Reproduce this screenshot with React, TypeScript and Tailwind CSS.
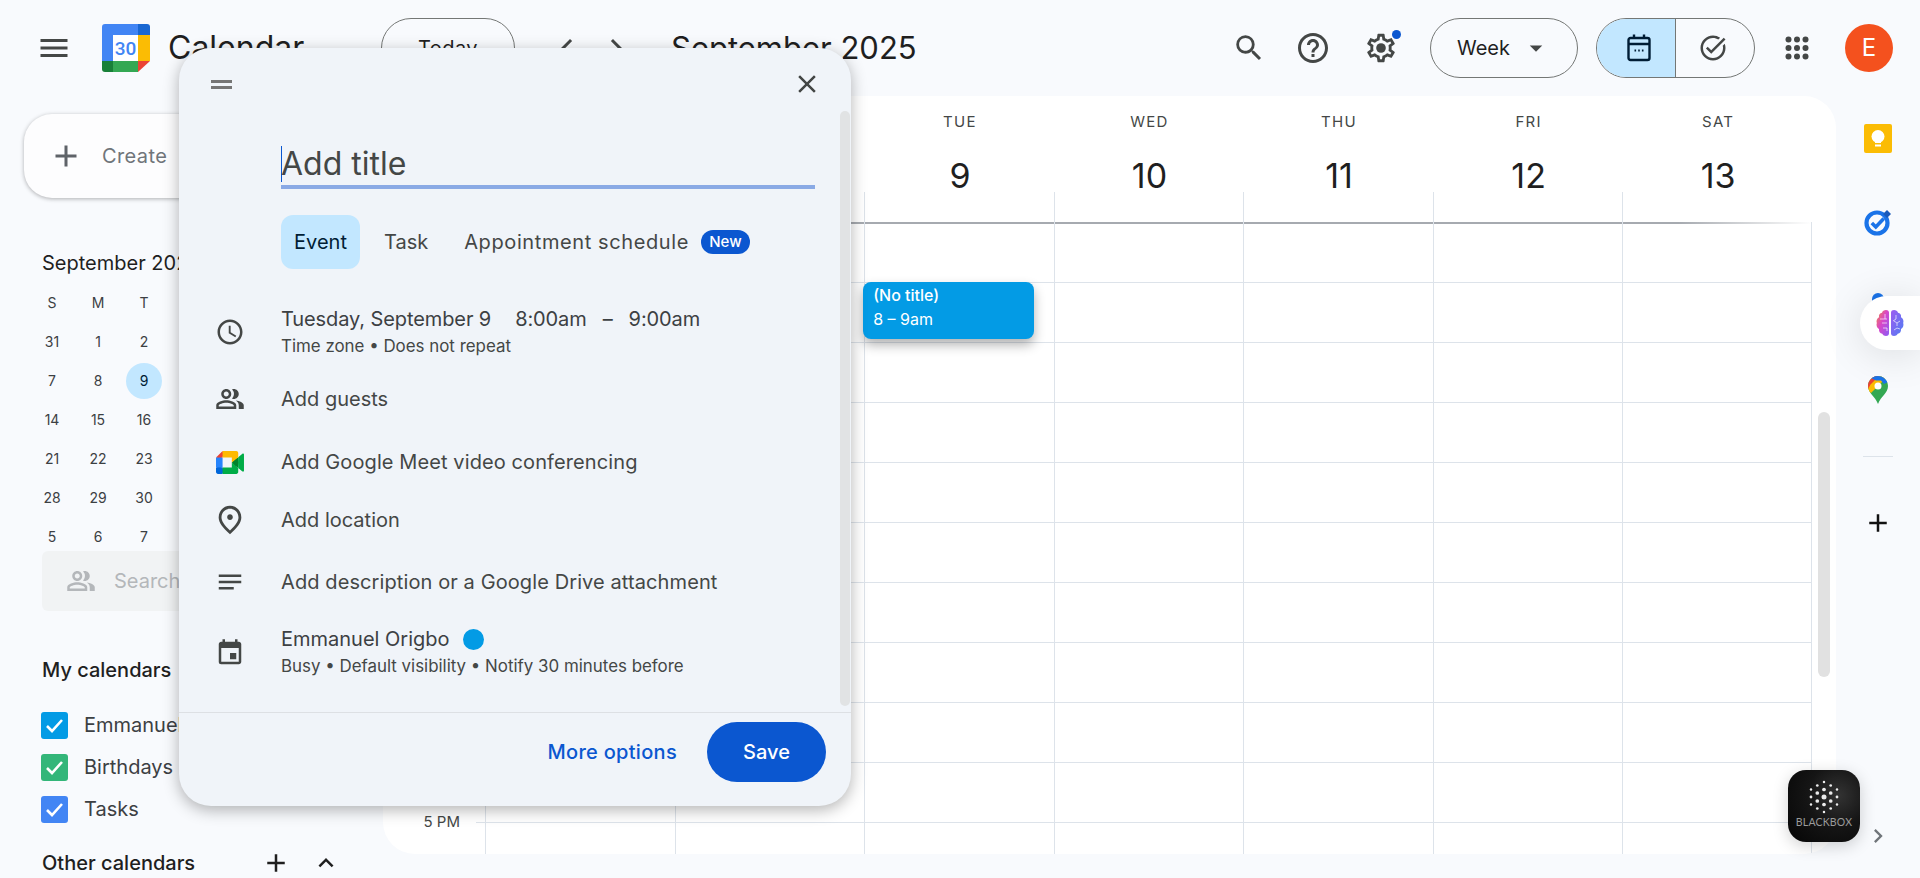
import { MdMenu, MdSearch, MdHelpOutline, MdClose, MdAccessTime, MdOutlinePeopleAlt, MdOutlinePlace, MdNotes, MdEvent, MdExpandLess, MdChevronRight, MdAdd, MdArrowDropDown, MdOutlineTaskAlt, MdChevronLeft } from 'react-icons/md';

const weeks = [
  [31, 1, 2, 3, 4, 5, 6],
  [7, 8, 9, 10, 11, 12, 13],
  [14, 15, 16, 17, 18, 19, 20],
  [21, 22, 23, 24, 25, 26, 27],
  [28, 29, 30, 1, 2, 3, 4],
  [5, 6, 7, 8, 9, 10, 11],
];

const days = [
  { name: 'SUN', date: 7 },
  { name: 'MON', date: 8 },
  { name: 'TUE', date: 9 },
  { name: 'WED', date: 10 },
  { name: 'THU', date: 11 },
  { name: 'FRI', date: 12 },
  { name: 'SAT', date: 13 },
];

const hours = ['', '8 AM', '9 AM', '10 AM', '11 AM', '12 PM', '1 PM', '2 PM', '3 PM', '4 PM', '5 PM'];

// dot columns of the blackbox mark, as [x offset, y offsets]
const dotColumns: [number, number[]][] = [
  [-13, [-7.5, 0, 7.5]],
  [-6.7, [-11.5, -4, 4, 11.5]],
  [0, [-15, -7.5, 0, 7.5, 15]],
  [6.7, [-11.5, -4, 4, 11.5]],
  [13, [-7.5, 0, 7.5]],
];

function CalendarLogo() {
  return (
    <svg width="48" height="48" viewBox="0 0 48 48" className="shrink-0">
      <path d="M3 0h33v11H11v26H0V3a3 3 0 0 1 3-3z" fill="#4285f4" />
      <path d="M36 0h9a3 3 0 0 1 3 3v8H36z" fill="#1967d2" />
      <rect x="36" y="11" width="12" height="26" fill="#fbbc04" />
      <path d="M11 37h25v11H11z" fill="#34a853" />
      <path d="M0 37h11v11H3a3 3 0 0 1-3-3z" fill="#188038" />
      <path d="M36 37h12L36 48z" fill="#ea4335" />
      <rect x="11" y="11" width="25" height="26" fill="#fff" />
      <text x="23.5" y="31" textAnchor="middle" fontSize="19" fontWeight="500" fill="#4285f4" fontFamily="Roboto, sans-serif">30</text>
    </svg>
  );
}

function SettingsIcon() {
  return (
    <svg width="34" height="34" viewBox="0 0 24 24" fill="#444746">
      <path d="M19.43 12.98c.04-.32.07-.64.07-.98 0-.34-.03-.66-.07-.98l2.11-1.65c.19-.15.24-.42.12-.64l-2-3.46c-.09-.16-.26-.25-.44-.25-.06 0-.12.01-.17.03l-2.49 1c-.52-.4-1.08-.73-1.69-.98l-.38-2.65C14.46 2.18 14.25 2 14 2h-4c-.25 0-.46.18-.49.42l-.38 2.65c-.61.25-1.17.59-1.69.98l-2.49-1c-.06-.02-.12-.03-.18-.03-.17 0-.34.09-.43.25l-2 3.46c-.13.22-.07.49.12.64l2.11 1.65c-.04.32-.07.65-.07.98 0 .33.03.66.07.98l-2.11 1.65c-.19.15-.24.42-.12.64l2 3.46c.09.16.26.25.44.25.06 0 .12-.01.17-.03l2.49-1c.52.4 1.08.73 1.69.98l.38 2.65c.03.24.24.42.49.42h4c.25 0 .46-.18.49-.42l.38-2.65c.61-.25 1.17-.59 1.69-.98l2.49 1c.06.02.12.03.18.03.17 0 .34-.09.43-.25l2-3.46c.12-.22.07-.49-.12-.64l-2.11-1.65zm-1.98-1.71c.04.31.05.52.05.73 0 .21-.02.43-.05.73l-.14 1.13.89.7 1.08.84-.7 1.21-1.27-.51-1.04-.42-.9.68c-.43.32-.84.56-1.25.73l-1.06.43-.16 1.13-.2 1.35h-1.4l-.19-1.35-.16-1.13-1.06-.43c-.43-.18-.83-.41-1.23-.71l-.91-.7-1.06.43-1.27.51-.7-1.21 1.08-.84.89-.7-.14-1.13c-.03-.31-.05-.54-.05-.74s.02-.43.05-.73l.14-1.13-.89-.7-1.08-.84.7-1.21 1.27.51 1.04.42.9-.68c.43-.32.84-.56 1.25-.73l1.06-.43.16-1.13.2-1.35h1.39l.19 1.35.16 1.13 1.06.43c.43.18.83.41 1.23.71l.91.7 1.06-.43 1.27-.51.7 1.21-1.07.85-.89.7.14 1.13z" />
      <circle cx="12" cy="12" r="3.4" />
    </svg>
  );
}

function AppsIcon() {
  return (
    <svg width="24" height="24" viewBox="0 0 24 24" fill="#444746">
      {[3.5, 12, 20.5].map((y) =>
        [3.5, 12, 20.5].map((x) => <circle key={`${x}-${y}`} cx={x} cy={y} r="3" />)
      )}
    </svg>
  );
}

function CalendarTabIcon() {
  return (
    <svg width="24" height="28" viewBox="0 0 24 28" fill="none" stroke="#001d35" strokeWidth="2.4">
      <rect x="1.5" y="4" width="21" height="22" rx="2" />
      <path d="M1.5 10h21M7 0.5v4M17 0.5v4" />
      <path d="M7.5 16.5h1.6M11.2 16.5h1.6M14.9 16.5h1.6" strokeWidth="2" />
    </svg>
  );
}

function MeetLogo() {
  return (
    <svg width="28" height="23" viewBox="0 0 87.5 72">
      <path fill="#00832d" d="M49.5 36l8.53 9.75 11.47 7.33 2-17.02-2-16.64-11.69 6.44z" />
      <path fill="#0066da" d="M0 51.5V66c0 3.315 2.685 6 6 6h14.5l3-10.96-3-9.54-9.95-3z" />
      <path fill="#e94235" d="M20.5 0L0 20.5l10.55 3 9.95-3 2.95-9.41z" />
      <path fill="#2684fc" d="M20.5 20.5H0v31h20.5z" />
      <path fill="#00ac47" d="M82.6 8.68L69.5 19.42v33.66l13.16 10.79c1.97 1.54 4.85.135 4.85-2.37V11c0-2.535-2.945-3.925-4.91-2.32zM49.5 36v15.5h-29V72h43c3.315 0 6-2.685 6-6V53.08z" />
      <path fill="#ffba00" d="M63.5 0h-43v20.5h29V36l20-16.57V6c0-3.315-2.685-6-6-6z" />
    </svg>
  );
}

function KeepIcon() {
  return (
    <svg width="28" height="29" viewBox="0 0 28 29">
      <rect width="28" height="29" rx="2" fill="#fbbc04" />
      <circle cx="14" cy="12.5" r="6.5" fill="#fff" />
      <rect x="11" y="16" width="6" height="3" fill="#fff" />
      <rect x="11" y="20.5" width="6" height="2" fill="#fff" />
    </svg>
  );
}

function TasksIcon() {
  return (
    <svg width="28" height="28" viewBox="0 0 28 28">
      <circle cx="13" cy="15" r="10.5" fill="none" stroke="#1a73e8" strokeWidth="4.2" />
      <path d="M7.8 15l4 4 8-8.5" fill="none" stroke="#1a73e8" strokeWidth="3.6" />
      <path d="M19 6l4-4 4 4-4 4z" fill="#185abc" />
    </svg>
  );
}

function MapsIcon() {
  return (
    <svg width="20" height="28" viewBox="0 0 20 28">
      <defs>
        <clipPath id="pin">
          <path d="M10 0C4.5 0 0 4.5 0 10c0 7 7 10 10 18 3-8 10-11 10-18C20 4.5 15.5 0 10 0z" />
        </clipPath>
      </defs>
      <g clipPath="url(#pin)">
        <rect width="20" height="28" fill="#34a853" />
        <path d="M0 10L10 0h10L3 17 0 15z" fill="#fbbc04" />
        <path d="M0 0h10v1L2.5 8.5 0 13z" fill="#ea4335" />
        <path d="M3 2L5 0h15v6l-4 2-3-3.5H8z" fill="#1a73e8" />
      </g>
      <circle cx="10" cy="10" r="3.5" fill="#fff" />
    </svg>
  );
}

function BrainIcon() {
  return (
    <svg width="28" height="26" viewBox="0 0 28 26">
      <defs>
        <linearGradient id="brainLeft" x1="0" y1="0" x2="1" y2="1">
          <stop offset="0" stopColor="#f58a3c" />
          <stop offset="0.45" stopColor="#d946c8" />
          <stop offset="1" stopColor="#8b5cf6" />
        </linearGradient>
        <linearGradient id="brainRight" x1="0" y1="0" x2="1" y2="1">
          <stop offset="0" stopColor="#9d5cf0" />
          <stop offset="1" stopColor="#4f7df3" />
        </linearGradient>
      </defs>
      <path d="M13 2.5C13 .8 11.5 0 10 0 8 0 6.5 1 6 2.8 3.8 3 2.5 5 3 7.2 1 8.4 0 10.5 .8 13 0 15.5 1 18 3 19c-.3 2.5 1 4.5 3.3 4.8C7 25.3 8.5 26 10 26c1.5 0 3-.8 3-2.5z" fill="url(#brainLeft)" />
      <path d="M15 2.5C15 .8 16.5 0 18 0c2 0 3.5 1 4 2.8 2.2.2 3.5 2.2 3 4.4 2 1.2 3 3.3 2.2 5.8.8 2.5-.2 5-2.2 6 .3 2.5-1 4.5-3.3 4.8C21 25.3 19.5 26 18 26c-1.5 0-3-.8-3-2.5z" fill="url(#brainRight)" />
      <path d="M4 9h7M6 13h5M7 18h4v3M9 4v5M20 5v4l-3 2M24 11l-3 2-3-2M21 13v3M24 19l-3-1-3 2" fill="none" stroke="#fff" strokeWidth="0.8" opacity="0.8" />
    </svg>
  );
}

function BlackboxLogo() {
  return (
    <div className="absolute left-[1788px] top-[770px] h-[72px] w-[72px] overflow-hidden rounded-[18px] bg-[radial-gradient(circle_at_70%_35%,#333_0%,#151515_45%,#050505_100%)] shadow-[0_4px_16px_rgba(0,0,0,0.18)]">
      <svg width="72" height="72" viewBox="0 0 72 72" className="absolute inset-0">
        {dotColumns.map(([dx, ys]) =>
          ys.map((dy) => (
            <circle key={`${dx}-${dy}`} cx={36 + dx} cy={27 + dy} r={2.5 - Math.hypot(dx, dy) * 0.085} fill="#ececec" />
          ))
        )}
      </svg>
      <div className="absolute inset-x-0 top-[45px] text-center text-[10.5px] leading-[14px] tracking-[0.2px] text-[#9a9a9a] font-['Lato',sans-serif]">BLACKBOX</div>
    </div>
  );
}

function Check({ color }: { color: string }) {
  return (
    <span className={`flex h-[27px] w-[27px] shrink-0 items-center justify-center rounded-[3px] ${color}`}>
      <svg width="19" height="15" viewBox="0 0 19 15" fill="none" stroke="#fff" strokeWidth="2.6">
        <path d="M2 8l5 5L17 2" />
      </svg>
    </span>
  );
}

function Sidebar() {
  return (
    <aside className="w-[383px] shrink-0 overflow-hidden">
      <button className="ml-6 mt-[18px] flex h-[84px] w-[240px] items-center rounded-[28px] bg-[#fdfdfe] pl-[24px] shadow-[0_1px_4px_rgba(0,0,0,0.3)]">
        <MdAdd className="text-[36px] text-[#5f6368]" />
        <span className="ml-[18px] text-[20px] tracking-[0.4px] text-[#70757a]">Create</span>
      </button>
      <div className="ml-[42px] mt-[51px] h-7 text-[20px] leading-7 text-[#1f1f1f]">September 2025</div>
      <div className="ml-[29px] mt-[6px] grid w-[322px] grid-cols-7 auto-rows-[39px] text-[14px] text-[#3c4043]">
        {['S', 'M', 'T', 'W', 'T', 'F', 'S'].map((d, i) => (
          <div key={i} className="flex items-center justify-center">{d}</div>
        ))}
        {weeks.flat().map((d, i) => (
          <div key={i} className="flex items-center justify-center">
            {i === 9 ? (
              <span className="flex h-9 w-9 items-center justify-center rounded-full bg-[#c2e7ff] text-[#001d35]">{d}</span>
            ) : (
              d
            )}
          </div>
        ))}
      </div>
      <div className="ml-[42px] -mt-[5px] flex h-[60px] w-[300px] items-center rounded-[6px] bg-[#f1f3f4] pl-[24px] text-[20px] text-[#b4b7ba]">
        <MdOutlinePeopleAlt className="text-[30px] text-[#b4b7ba]" />
        <span className="ml-[18px]">Search for people</span>
      </div>
      <div className="ml-[42px] mt-[45px] h-7 text-[20px] leading-7 font-medium text-[#1f1f1f]">My calendars</div>
      <div className="ml-[41px] mt-[20px] flex flex-col">
        {[
          { label: 'Emmanuel Origbo', color: 'bg-[#039be5]' },
          { label: 'Birthdays', color: 'bg-[#33b679]' },
          { label: 'Tasks', color: 'bg-[#4285f4]' },
        ].map((c) => (
          <div key={c.label} className="flex h-[42px] items-center gap-[16px] text-[20px] text-[#3c4043]">
            <Check color={c.color} />
            {c.label}
          </div>
        ))}
      </div>
      <div className="ml-[42px] mt-[19px] flex h-7 items-center text-[20px] font-medium text-[#1f1f1f]">
        Other calendars
        <MdAdd className="ml-auto text-[30px] text-[#1f1f1f]" />
        <MdExpandLess className="ml-[20px] mr-[42px] text-[30px] text-[#1f1f1f]" />
      </div>
    </aside>
  );
}

function CalendarPanel() {
  return (
    <main className="mb-6 flex min-w-0 flex-1 flex-col overflow-hidden rounded-[32px] bg-white">
      <div className="ml-[102px] mr-6 grid shrink-0 grid-cols-7">
        {days.map((d) => (
          <div key={d.name} className="flex flex-col items-center">
            <div className="ml-[2px] mt-[16px] h-5 text-[15px] leading-5 tracking-[1.3px] text-[#444746]">{d.name}</div>
            <div className="ml-[2px] mt-[27px] h-[33px] text-[34px] leading-[34px] text-[#1f1f1f]">{d.date}</div>
            <div className="h-[30px] w-full border-l border-[#dde3ea]" />
          </div>
        ))}
      </div>
      <div className="relative flex-1">
        <div className="absolute top-0 left-[93px] right-6 h-[2px] bg-linear-to-r from-[#a6aab0] from-90% to-transparent" />
        {hours.map((h, i) => (
          <div key={i} className="flex h-[60px]">
            <div className="relative w-[93px] shrink-0">
              {h && <span className="absolute right-[16px] -top-[10px] text-[15px] leading-5 text-[#444746]">{h}</span>}
            </div>
            <div className={`mr-6 flex-1 border-t ${i === 0 ? 'border-transparent' : 'border-[#dde3ea]'}`} />
          </div>
        ))}
        <div className="absolute inset-y-0 left-[102px] right-6 grid grid-cols-7">
          {days.map((d) => (
            <div key={d.name} className="relative border-l border-[#dde3ea] last:border-r">
              {d.name === 'TUE' && (
                <div className="absolute -left-[2px] top-[60px] h-[57px] w-[171px] rounded-[8px] bg-[#039be5] pl-[10px] pt-[1px] text-[16px] leading-[24px] text-white shadow-[0_6px_12px_rgba(0,0,0,0.3)]">
                  <div className="font-medium">(No title)</div>
                  <div>8 – 9am</div>
                </div>
              )}
            </div>
          ))}
        </div>
        <div className="absolute right-[6px] top-[190px] h-[265px] w-3 rounded-full bg-[#e1e1e1]" />
      </div>
    </main>
  );
}

function Rail() {
  return (
    <aside className="flex w-[84px] shrink-0 flex-col items-center">
      <div className="flex h-[84px] items-center justify-center"><KeepIcon /></div>
      <div className="flex h-[84px] items-center justify-center"><TasksIcon /></div>
      <div className="flex h-[84px] items-center justify-center"><span className="h-[26px] w-[12px] rounded-full bg-[#1a73e8]" /></div>
      <div className="flex h-[84px] items-center justify-center"><MapsIcon /></div>
      <div className="mt-[24px] h-px w-[30px] bg-[#dde3ea]" />
      <MdAdd className="mt-[51px] text-[30px] text-[#111]" />
    </aside>
  );
}

function Popup() {
  return (
    <div className="absolute left-[179px] top-[48px] flex h-[758px] w-[672px] flex-col overflow-hidden rounded-[32px] bg-[#f0f4f9] shadow-[0_4px_16px_rgba(0,0,0,0.3)]">
      <div className="flex h-[72px] shrink-0 items-center justify-between pl-[32px] pr-[29px]">
        <div className="flex w-[21px] flex-col gap-[3px]">
          <span className="h-[3px] bg-[#757575]" />
          <span className="h-[3px] bg-[#757575]" />
        </div>
        <MdClose className="text-[30px] text-[#444746]" />
      </div>
      <div className="absolute right-[1px] top-[63px] h-[595px] w-[10px] rounded-full bg-[#e1e3e4]" />
      <div className="relative ml-[102px] mr-[36px] h-[69px] shrink-0 border-b-4 border-[#8aaae5]">
        <span className="absolute left-0 top-[26px] h-[36px] w-px bg-[#0b57d0]" />
        <span className="absolute left-0 top-[22px] text-[32px] leading-[44px] text-[#444746]">Add title</span>
      </div>
      <div className="ml-[102px] mt-[26px] flex h-[54px] shrink-0 items-center text-[20px] text-[#444746]">
        <span className="flex h-[54px] w-[79px] items-center justify-center rounded-[12px] bg-[#c2e7ff] text-[#001d35]">Event</span>
        <span className="ml-[24px]">Task</span>
        <span className="ml-[36px] tracking-[0.6px]">Appointment schedule</span>
        <span className="ml-[12px] flex h-6 w-[49px] items-center justify-center rounded-full bg-[#0b57d0] text-[15px] font-medium text-white">New</span>
      </div>
      <div className="mt-[36px] flex h-[54px] shrink-0 items-center">
        <div className="flex w-[102px] justify-center"><MdAccessTime className="text-[30px] text-[#444746]" /></div>
        <div>
          <div className="flex h-7 items-center text-[20px] tracking-[-0.1px] text-[#3c4043]">
            <span>Tuesday, September 9</span>
            <span className="ml-6">8:00am</span>
            <span className="ml-4">–</span>
            <span className="ml-4">9:00am</span>
          </div>
          <div className="h-[26px] text-[16.9px] leading-[26px] text-[#444746]">Time zone • Does not repeat</div>
        </div>
      </div>
      <div className="mt-[12px] flex h-[56px] shrink-0 items-center">
        <div className="flex w-[102px] justify-center"><MdOutlinePeopleAlt className="text-[30px] text-[#444746]" /></div>
        <span className="text-[20px] text-[#444746]">Add guests</span>
      </div>
      <div className="mt-[7px] flex h-[56px] shrink-0 items-center">
        <div className="flex w-[102px] justify-center"><MeetLogo /></div>
        <span className="text-[20px] tracking-[0.1px] text-[#444746]">Add Google Meet video conferencing</span>
      </div>
      <div className="mt-[2px] flex h-[56px] shrink-0 items-center">
        <div className="flex w-[102px] justify-center"><MdOutlinePlace className="text-[34px] text-[#444746]" /></div>
        <span className="text-[20px] text-[#444746]">Add location</span>
      </div>
      <div className="mt-[6px] flex h-[56px] shrink-0 items-center">
        <div className="flex w-[102px] justify-center"><MdNotes className="text-[30px] text-[#444746]" /></div>
        <span className="text-[20px] tracking-[0.1px] text-[#444746]">Add description or a Google Drive attachment</span>
      </div>
      <div className="mt-[15px] flex h-[54px] shrink-0 items-center">
        <div className="flex w-[102px] justify-center pt-[2px]"><MdEvent className="text-[30px] text-[#444746]" /></div>
        <div>
          <div className="flex h-7 items-center text-[20px] text-[#3c4043]">
            Emmanuel Origbo
            <span className="ml-[13px] h-[21px] w-[21px] rounded-full bg-[#039be5]" />
          </div>
          <div className="h-[26px] text-[16.9px] leading-[26px] text-[#444746]">Busy • Default visibility • Notify 30 minutes before</div>
        </div>
      </div>
      <div className="mt-auto flex h-[94px] shrink-0 justify-end gap-[30px] border-t border-[#dde0e4] pr-[25px] pt-[9px]">
        <span className="flex h-[60px] items-center text-[20px] font-medium tracking-[0.3px] text-[#0b57d0]">More options</span>
        <span className="flex h-[60px] w-[119px] items-center justify-center rounded-full bg-[#0b57d0] text-[20px] font-medium text-white">Save</span>
      </div>
    </div>
  );
}

export default function App() {
  return (
    <div className="relative flex h-[878px] w-[1920px] flex-col overflow-hidden bg-[#f8fafd] font-['Inter',sans-serif]">
      <header className="flex h-[96px] shrink-0 items-center">
        <MdMenu className="ml-[36px] text-[36px] text-[#444746]" />
        <div className="ml-[30px]"><CalendarLogo /></div>
        <span className="ml-[18px] w-[213px] text-[32px] text-[#1f1f1f]">Calendar</span>
        <button className="flex h-[60px] w-[134px] items-center justify-center rounded-full border border-[#747775] text-[20px] tracking-[0.4px] text-[#1f1f1f]">Today</button>
        <MdChevronLeft className="ml-[34px] text-[36px] text-[#444746]" />
        <MdChevronRight className="ml-[13px] text-[36px] text-[#444746]" />
        <span className="ml-[37px] text-[31px] text-[#1f1f1f]">September 2025</span>
        <MdSearch className="ml-auto text-[34px] text-[#444746]" />
        <MdHelpOutline className="ml-[29px] text-[36px] text-[#444746]" />
        <div className="relative ml-[33px]">
          <SettingsIcon />
          <span className="absolute -right-[3px] -top-[1px] h-[9px] w-[9px] rounded-full bg-[#0b57d0]" />
        </div>
        <button className="ml-[32px] flex h-[60px] w-[148px] items-center rounded-full border border-[#747775] pl-[26px] text-[20px] text-[#1f1f1f]">
          Week
          <MdArrowDropDown className="ml-[11px] text-[30px] text-[#444746]" />
        </button>
        <div className="ml-[18px] flex h-[60px] w-[159px] overflow-hidden rounded-full border border-[#747775]">
          <div className="flex w-[79px] items-center justify-center border-r border-[#747775] bg-[#c2e7ff] pl-[5px]"><CalendarTabIcon /></div>
          <div className="flex flex-1 items-center justify-center pr-[5px]"><MdOutlineTaskAlt className="text-[30px] text-[#444746]" /></div>
        </div>
        <div className="ml-[30px]"><AppsIcon /></div>
        <div className="ml-[36px] mr-[27px] flex h-12 w-12 items-center justify-center rounded-full bg-[#f4511e] text-[24px] text-white">E</div>
      </header>
      <div className="flex min-h-0 flex-1">
        <Sidebar />
        <CalendarPanel />
        <Rail />
      </div>
      <div className="absolute right-0 top-[296px] flex h-[54px] w-[60px] items-center rounded-l-full bg-white pl-[16px] shadow-[0_4px_40px_rgba(0,0,0,0.12)]">
        <BrainIcon />
      </div>
      <BlackboxLogo />
      <MdChevronRight className="absolute left-[1864px] top-[822px] text-[28px] text-[#70757a]" />
      <Popup />
    </div>
  );
}
